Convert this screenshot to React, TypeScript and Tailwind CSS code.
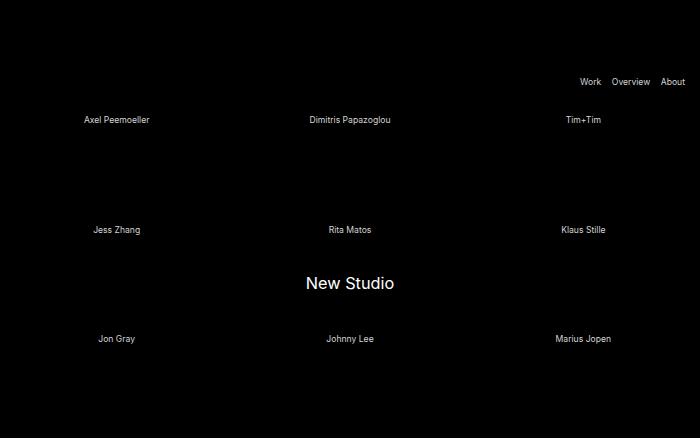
import React from "react";

const rows = [
  ["Axel Peemoeller", "Dimitris Papazoglou", "Tim+Tim"],
  ["Jess Zhang", "Rita Matos", "Klaus Stille"],
  ["Jon Gray", "Johnny Lee", "Marius Jopen"],
];

export default function App() {
  return (
    <div className="w-[700px] h-[438px] bg-black text-[#d4d4d4] overflow-hidden font-['Inter',sans-serif]">
      <nav className="flex justify-end gap-[10.5px] pt-[76px] pr-[15px] text-[8.6px] leading-[12px]">
        <span>Work</span>
        <span>Overview</span>
        <span>About</span>
      </nav>
      <div className="grid grid-cols-3 mt-[-22px]">
        {rows.map((row, i) => (
          <React.Fragment key={i}>
            {i === 2 && (
              <div className="col-span-3 h-0 flex items-center justify-center">
                <span className="text-[16.3px] text-white leading-none mb-[3px]">New Studio</span>
              </div>
            )}
            {row.map((name) => (
              <div key={name} className="h-[109.5px] flex items-center justify-center text-[8.6px]">
                {name}
              </div>
            ))}
          </React.Fragment>
        ))}
      </div>
    </div>
  );
}
